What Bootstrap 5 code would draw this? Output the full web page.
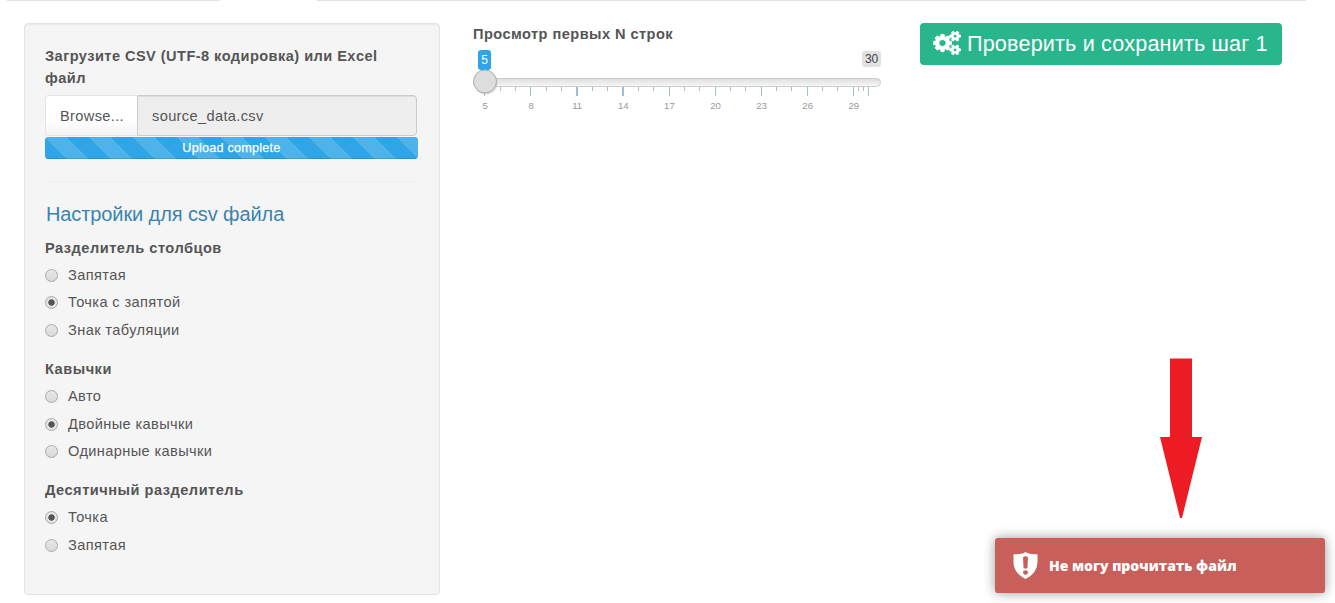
<!DOCTYPE html>
<html lang="ru">
<head>
<meta charset="utf-8">
<title>Загрузка данных</title>
<link href="https://cdn.jsdelivr.net/npm/bootstrap@5.3.0/dist/css/bootstrap.min.css" rel="stylesheet">
<style>
body{font-family:"Liberation Sans",Arial,sans-serif;font-size:14.6px;line-height:22px;color:#555;background:#fff;height:603px;overflow:hidden}
.tab-line{height:1px;background:#e3e3e3}
.page{padding:22px 0 0 24px}
.well{width:416px;height:572px;background:#f5f5f5;border:1px solid #e3e3e3;border-radius:4px;padding:21px 21px 0 20px;box-shadow:inset 0 1px 1px rgba(0,0,0,.05)}
.ctl{font-weight:700;display:block;white-space:nowrap}
.file-row{height:41px;margin-top:6px;width:372px}
.browse{width:92px;padding:0 0 0 14px;border:1px solid #e4e4e4;border-right:0;border-radius:4px 0 0 4px;background:linear-gradient(#fff 60%,#f4f4f4);line-height:40px}
.fname{border:1px solid #ccc;background:#eee;border-radius:0 4px 4px 0;padding-left:14px;line-height:40px;box-shadow:inset 0 1px 1px rgba(0,0,0,.075)}
.upl{height:22px;width:373px;margin-top:1px;border-radius:4px;background-color:#2fa4e7}
.upl .progress-bar{background-color:#2fa4e7;background-image:linear-gradient(45deg,rgba(255,255,255,.15) 25%,transparent 25%,transparent 50%,rgba(255,255,255,.15) 50%,rgba(255,255,255,.15) 75%,transparent 75%,transparent);background-size:44px 44px;font-size:12.6px;letter-spacing:.25px;-webkit-text-stroke:.25px #fff;box-shadow:inset 0 -1px 0 rgba(0,0,0,.12)}
.sep{height:1px;background:#eee;width:373px;margin:22px 0 21px}
.ttl{font-size:20px;letter-spacing:-.1px;line-height:24px;color:#3a84b0;margin:-1px 0 11px 1px;white-space:nowrap;font-weight:400}
.opts{margin-top:2px;margin-bottom:14.4px}
.opt{height:27.6px;line-height:22px;display:flex;align-items:center;white-space:nowrap;font-size:14.6px;letter-spacing:.38px}
.opt input{appearance:none;width:13px;height:13px;margin:1px 10px 0 0;border-radius:50%;border:1px solid #aaa;background:linear-gradient(#e8e8e8,#d9d9d9)}
.opt input:checked{background:radial-gradient(circle,#555 0 2.8px,#e4e4e4 3.6px)}
.view{width:408px;margin-left:33px}
.vals{height:20px;margin-top:4px;font-size:12px;line-height:18px}
.v-now{background:#2fa4e7;color:#fff;border-radius:3px;width:13px;margin-left:5px;text-align:center;height:20px;line-height:20px;margin-top:1px}
.v-max{background:#e1e1e1;color:#444;border-radius:3px;width:19px;height:16px;margin-top:2px;line-height:16px;text-align:center;letter-spacing:-.2px}
.scale{height:32px;display:block}
.nums{margin-left:-11px;margin-top:-1px;font-size:9.6px;line-height:12px;color:#999}
.nums span{width:46.1px;text-align:center;flex:none}
.save{width:362px;height:42px;margin-left:39px;background:#29b68c;border:0;border-radius:4px;color:#fff;font-size:21.6px;line-height:42px;padding:0 0 0 13px;white-space:nowrap;text-align:left}
.save:hover{background:#29b68c;color:#fff}
.arrow{position:absolute;left:1160px;top:358px}
.note{position:absolute;left:995px;top:538px;width:330px;height:55px;background:#c95f5a;border-radius:3px;color:#fff;box-shadow:0 0 12px rgba(0,0,0,.4);font:800 14px/55px "Open Sans",sans-serif;padding-left:18px}
</style>
</head>
<body class="position-relative">
<div class="d-flex"><div class="tab-line" style="width:213px;margin-left:7px"></div><div class="tab-line" style="width:989px;margin-left:97px"></div></div>
<main class="page d-flex align-items-start">
  <form class="well flex-shrink-0">
    <label class="ctl"><span style="letter-spacing:.44px">Загрузите CSV (UTF-8 кодировка) или Excel<br>файл</span></label>
    <div class="file-row d-flex"><div class="browse"><span style="letter-spacing:.35px">Browse...</span></div><div class="fname flex-fill"><span style="letter-spacing:.36px">source_data.csv</span></div></div>
    <div class="progress upl"><div class="progress-bar w-100">Upload complete</div></div>
    <div class="sep"></div>
    <h4 class="ttl">Настройки для csv файла</h4>
    <label class="ctl"><span style="letter-spacing:.5px">Разделитель столбцов</span></label>
    <div class="opts">
      <label class="opt"><input type="radio" name="sep"><span>Запятая</span></label>
      <label class="opt"><input type="radio" name="sep" checked><span>Точка с запятой</span></label>
      <label class="opt"><input type="radio" name="sep"><span>Знак табуляции</span></label>
    </div>
    <label class="ctl"><span style="letter-spacing:.5px">Кавычки</span></label>
    <div class="opts">
      <label class="opt"><input type="radio" name="quote"><span>Авто</span></label>
      <label class="opt"><input type="radio" name="quote" checked><span>Двойные кавычки</span></label>
      <label class="opt"><input type="radio" name="quote"><span>Одинарные кавычки</span></label>
    </div>
    <label class="ctl"><span style="letter-spacing:.5px">Десятичный разделитель</span></label>
    <div class="opts">
      <label class="opt"><input type="radio" name="dec" checked><span>Точка</span></label>
      <label class="opt"><input type="radio" name="dec"><span>Запятая</span></label>
    </div>
  </form>
  <section class="view flex-shrink-0">
    <label class="ctl"><span style="letter-spacing:.44px">Просмотр первых N строк</span></label>
    <div class="vals d-flex justify-content-between"><span class="v-now">5</span><span class="v-max">30</span></div>
    <svg class="scale" width="410" height="32" viewBox="0 0 410 32">
      <defs><linearGradient id="bar" x2="0" y2="1"><stop stop-color="#ddd"/><stop offset="1" stop-color="#f8f8f8"/></linearGradient></defs>
      <rect x=".5" y="9.5" width="407" height="8" rx="4" fill="url(#bar)" stroke="#ccc"/>
      <path d="M27.5 18v4M42.5 18v4M73.5 18v4M88.5 18v4M119.5 18v4M134.5 18v4M165.5 18v4M180.5 18v4M211.5 18v4M226.5 18v4M257.5 18v4M272.5 18v4M303.5 18v4M318.5 18v4M349.5 18v4M364.5 18v4M385.5 18v4M390.5 18v4" stroke="#bbb"/>
      <path d="M11.5 18v9M57.5 18v9M196.500 18v9M242.5 18v9M288.5 18v9M334.5 18v9M380.500 18v9M395.5 18v9" stroke="#99bfdd"/>
      <path d="M104 18v9M150 18v9" stroke="#99bfdd" stroke-width="2"/>
      <circle cx="13" cy="14" r="11.500" fill="#aaa" opacity=".35"/>
      <circle cx="12" cy="12.500" r="11.500" fill="#ddd" stroke="#aaa"/>
    </svg>
    <div class="nums d-flex"><span>5</span><span>8</span><span>11</span><span>14</span><span>17</span><span>20</span><span>23</span><span>26</span><span>29</span></div>
  </section>
  <button type="button" class="btn save flex-shrink-0"><svg width="28" height="24" viewBox="-30 0 1980 1792" preserveAspectRatio="none" fill="#fff" stroke="#fff" stroke-width="65" style="vertical-align:-4px"><path d="M896 896q0-106-75-181t-181-75-181 75-75 181 75 181 181 75 181-75 75-181zm768 512q0-52-38-90t-90-38-90 38-38 90q0 53 37.500 90.500t90.500 37.500 90.500-37.500 37.500-90.500zm0-1024q0-52-38-90t-90-38-90 38-38 90q0 53 37.500 90.500t90.500 37.500 90.500-37.500 37.500-90.500zm-384 421v185q0 10-7 19.500t-16 10.500l-155 24q-11 35-32 76 34 48 90 115 7 11 7 20 0 12-7 19-23 30-82.500 89.500t-78.500 59.500q-11 0-21-7l-115-90q-37 19-77 31-11 108-23 155-7 24-30 24h-186q-11 0-20-7.500t-10-17.500l-23-153q-34-10-75-31l-118 89q-7 7-20 7-11 0-21-8-144-133-144-160 0-9 7-19 10-14 41-53t47-61q-23-44-35-82l-152-24q-10-1-17-9.500t-7-19.500v-185q0-10 7-19.500t16-10.500l155-24q11-35 32-76-34-48-90-115-7-11-7-20 0-12 7-20 22-30 82-89t79-59q11 0 21 7l115 90q34-18 77-32 11-108 23-154 7-24 30-24h186q11 0 20 7.500t10 17.500l23 153q34 10 75 31l118-89q8-7 20-7 11 0 21 8 144 133 144 160 0 8-7 19-12 16-42 54t-45 60q23 48 34 82l152 23q10 2 17 10.500t7 19.500zm640 533v140q0 16-149 31-12 27-30 52 51 113 51 138 0 4-4 7-122 71-124 71-8 0-46-47t-52-68q-20 2-30 2t-30-2q-14 21-52 68t-46 47q-2 0-124-71-4-3-4-7 0-25 51-138-18-25-30-52-149-15-149-31v-140q0-16 149-31 13-29 30-52-51-113-51-138 0-4 4-7 4-2 35-20t59-34 30-16q8 0 46 46.500t52 67.500q20-2 30-2t30 2q51-71 92-112l6-2q4 0 124 70 4 3 4 7 0 25-51 138 17 23 30 52 149 15 149 31zm0-1024v140q0 16-149 31-12 27-30 52 51 113 51 138 0 4-4 7-122 71-124 71-8 0-46-47t-52-68q-20 2-30 2t-30-2q-14 21-52 68t-46 47q-2 0-124-71-4-3-4-7 0-25 51-138-18-25-30-52-149-15-149-31v-140q0-16 149-31 13-29 30-52-51-113-51-138 0-4 4-7 4-2 35-20t59-34 30-16q8 0 46 46.500t52 67.500q20-2 30-2t30 2q51-71 92-112l6-2q4 0 124 70 4 3 4 7 0 25-51 138 17 23 30 52 149 15 149 31z"/></svg> <span style="letter-spacing:.17px">Проверить и сохранить шаг 1</span></button>
</main>
<svg class="arrow" width="42" height="160" viewBox="0 0 42 160"><path d="M10 .5H32V79H42L22 160H20L0 79H10Z" fill="#ed1c24"/></svg>
<div class="note d-flex align-items-center" role="alert"><svg width="25" height="27" viewBox="0 0 25 27" class="me-2"><path d="M12.500 0Q16 2.500 24.500 2.300V10Q24.500 21 12.500 27Q.5 21 .5 10V2.300Q9 2.500 12.500 0Z" fill="#fff"/><path d="M10 5.500Q12.500 3 15 5.500L14.500 15.500Q12.500 18 10.500 15.500Z" fill="#c95f5a"/><ellipse cx="12.500" cy="20.500" rx="2.500" ry="2.200" fill="#c95f5a"/></svg><span style="margin-left:3px">Не могу прочитать файл</span></div>
<script src="https://cdn.jsdelivr.net/npm/bootstrap@5.3.0/dist/js/bootstrap.bundle.min.js"></script>
</body>
</html>
